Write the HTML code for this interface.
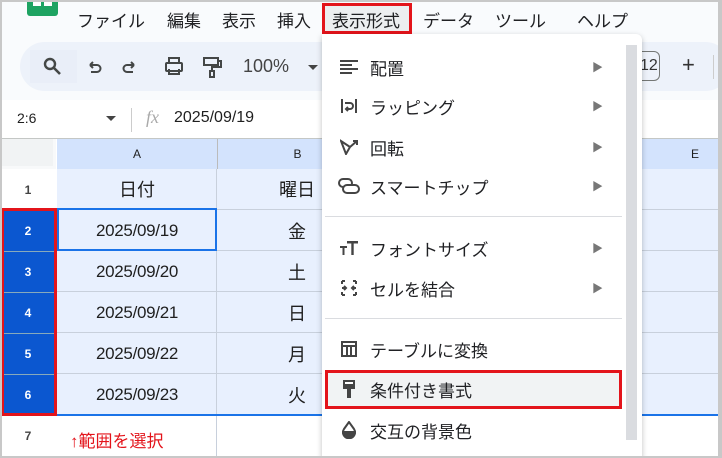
<!DOCTYPE html><html><head><meta charset="utf-8"><style>
*{margin:0;padding:0;box-sizing:border-box}
body{width:722px;height:458px;overflow:hidden;background:#fff;font-family:"Liberation Sans","Noto Sans CJK JP",sans-serif;position:relative;color:#1f1f1f}
.a{position:absolute}
.menu span{position:absolute;top:7px;font-size:17px;color:#202124}
.cell{position:absolute;display:flex;align-items:center;justify-content:center;font-size:16px}
.d{font-size:17px;letter-spacing:-0.3px}
.rh{position:absolute;left:0;width:56px;display:flex;align-items:center;justify-content:center;font-size:12px;font-weight:bold}
.mi{position:absolute;left:322px;width:300px;height:38px;display:flex;align-items:center;font-size:17px;color:#202124}
.mi .ic{width:48px;display:flex;justify-content:center;padding-left:6px}
.mi .ar{position:absolute;left:270px;font-size:11px;color:#777}
</style></head><body>
<div class="a" style="left:0;top:0;width:722px;height:36px;background:#f9fbfd"></div>
<div class="a" style="left:27px;top:0;width:31px;height:16px;background:#1ea362;border-radius:0 0 3px 3px"></div>
<div class="a" style="left:33px;top:2px;width:8px;height:4px;background:#fff"></div><div class="a" style="left:44px;top:2px;width:8px;height:4px;background:#fff"></div>
<div class="menu"><span style="left:77px">ファイル</span><span style="left:167px">編集</span><span style="left:222px">表示</span><span style="left:277px">挿入</span>
<span style="left:332px">表示形式</span><span style="left:423px">データ</span><span style="left:495px">ツール</span><span style="left:577px">ヘルプ</span></div>
<div class="a" style="left:322px;top:3px;width:90px;height:31px;border:3px solid #e3141b;background:rgba(0,0,0,.05)"></div>
<div class="a" style="left:0;top:36px;width:722px;height:64px;background:#f9fbfd"></div>
<div class="a" style="left:20px;top:42px;width:710px;height:49px;background:#edf2fa;border-radius:25px"></div>
<div class="a" style="left:30px;top:50px;width:47px;height:33px;background:#e9eef8"></div>
<svg class="a" style="left:40px;top:55px" width="290" height="26" fill="none" stroke="#444746" stroke-width="2">
<circle cx="10" cy="9" r="5" stroke-width="2.4"/><path d="M14 13l6 6" stroke-width="2.6"/>
<path d="M50 10h7a3.5 3.5 0 010 7h-6M50 10l3-3M50 10l3 3" />
<path d="M94 10h-7a3.5 3.5 0 000 7h6M94 10l-3-3M94 10l-3 3"/>
<rect x="126" y="8" width="16" height="8" rx="1"/><path d="M129 8V3h10v5M129 14v5h10v-5"/>
<rect x="164" y="3" width="14" height="7"/><path d="M178 6h3v6h-9v4"/><rect x="170" y="16" width="4" height="6"/>
</svg>
<div class="a" style="left:243px;top:56px;font-size:18px;color:#444">100%</div>
<div class="a" style="left:308px;top:65px;border:5px solid transparent;border-top-color:#444"></div>
<div class="a" style="left:640px;top:51px;width:20px;height:30px;border:1px solid #747775;border-left:none;border-radius:0 6px 6px 0;font-size:16px;padding:5px 0 0 0;color:#333">12</div>
<div class="a" style="left:682px;top:52px;font-size:22px;color:#333">+</div>
<div class="a" style="left:713px;top:55px;width:1px;height:24px;background:#ccc"></div>
<div class="a" style="left:17px;top:110px;font-size:14px">2:6</div>
<div class="a" style="left:106px;top:116px;border:5px solid transparent;border-top-color:#444"></div>
<div class="a" style="left:131px;top:108px;width:1px;height:24px;background:#ccc"></div>
<div class="a" style="left:146px;top:107px;font-size:18px;color:#aaa;font-style:italic;font-family:'Liberation Serif',serif">fx</div>
<div class="a" style="left:174px;top:109px;font-size:16px">2025/09/19</div>
<div class="a" style="left:0;top:138px;width:722px;height:1px;background:#c4c7c5"></div>
<div class="a" style="left:0;top:139px;width:56px;height:30px;background:#f8f9fa"></div>
<div class="a" style="left:0;top:139px;width:53px;height:27px;background:#f1f3f4"></div>
<div class="a" style="left:57px;top:139px;width:665px;height:30px;background:#d3e3fd"></div>
<div class="cell" style="left:57px;top:139px;width:160px;height:30px;font-size:12px">A</div>
<div class="cell" style="left:217px;top:139px;width:160px;height:30px;font-size:12px;border-left:1px solid #bbb">B</div>
<div class="cell" style="left:660px;top:139px;width:70px;height:30px;font-size:12px">E</div>
<div class="a" style="left:57px;top:169px;width:665px;height:246px;background:#e8f0fe"></div>
<div class="a" style="left:0;top:169px;width:57px;height:41px;background:#fff"></div>
<div class="rh" style="top:169px;height:41px;color:#444">1</div>
<div class="rh" style="top:415px;height:41px;color:#444">7</div>
<div class="a" style="left:2px;top:210px;width:54px;height:205px;background:#0b57d0"></div>
<div class="rh" style="top:210px;height:41px;color:#fff">2</div><div class="rh" style="top:251px;height:41px;color:#fff;border-top:1px solid #8ab">3</div><div class="rh" style="top:292px;height:41px;color:#fff;border-top:1px solid #8ab">4</div><div class="rh" style="top:333px;height:41px;color:#fff;border-top:1px solid #8ab">5</div><div class="rh" style="top:374px;height:41px;color:#fff;border-top:1px solid #8ab">6</div>
<div class="a" style="left:1px;top:208px;width:56px;height:208px;border:3px solid #e3141b"></div>
<div class="a" style="left:216px;top:169px;width:1px;height:289px;background:#c8d0dc"></div>
<div class="a" style="left:57px;top:209px;width:665px;height:1px;background:#c8d0dc"></div>
<div class="a" style="left:57px;top:250px;width:665px;height:1px;background:#c8d0dc"></div>
<div class="a" style="left:57px;top:291px;width:665px;height:1px;background:#c8d0dc"></div>
<div class="a" style="left:57px;top:332px;width:665px;height:1px;background:#c8d0dc"></div>
<div class="a" style="left:57px;top:373px;width:665px;height:1px;background:#c8d0dc"></div>
<div class="a" style="left:57px;top:414px;width:665px;height:2px;background:#1a73e8"></div>
<div class="a" style="left:57px;top:208px;width:160px;height:43px;border:2px solid #1a73e8"></div>
<div class="cell" style="left:57px;top:169px;width:160px;height:40px;font-size:18px">日付</div>
<div class="cell" style="left:217px;top:169px;width:160px;height:40px;font-size:18px">曜日</div>
<div class="cell d" style="left:57px;top:210px;width:160px;height:41px">2025/09/19</div>
<div class="cell d" style="left:57px;top:251px;width:160px;height:41px">2025/09/20</div>
<div class="cell d" style="left:57px;top:292px;width:160px;height:41px">2025/09/21</div>
<div class="cell d" style="left:57px;top:333px;width:160px;height:41px">2025/09/22</div>
<div class="cell d" style="left:57px;top:374px;width:160px;height:41px">2025/09/23</div>
<div class="cell" style="left:217px;top:210px;width:160px;height:41px;font-size:18px">金</div>
<div class="cell" style="left:217px;top:251px;width:160px;height:41px;font-size:18px">土</div>
<div class="cell" style="left:217px;top:292px;width:160px;height:41px;font-size:18px">日</div>
<div class="cell" style="left:217px;top:333px;width:160px;height:41px;font-size:18px">月</div>
<div class="cell" style="left:217px;top:374px;width:160px;height:41px;font-size:18px">火</div>
<div class="a" style="left:70px;top:427px;font-size:17px;color:#e3141b">↑範囲を選択</div>
<div class="a" style="left:322px;top:34px;width:320px;height:424px;background:#fff;border-radius:0 6px 0 0;box-shadow:0 2px 6px rgba(0,0,0,.25)"></div>
<div class="a" style="left:626px;top:45px;width:11px;height:395px;background:#dadce0"></div>
<div class="a" style="left:325px;top:216px;width:297px;height:1px;background:#dadce0"></div>
<div class="a" style="left:325px;top:318px;width:297px;height:1px;background:#dadce0"></div>
<div class="a" style="left:325px;top:370px;width:297px;height:39px;background:#f1f3f4;border:3px solid #e3141b"></div>
<div class="mi" style="top:48px"><span class="ic"><svg width="18" height="14" stroke="#444" stroke-width="2"><path d="M0 1h18M0 5h12M0 9h18M0 13h12"/></svg></span>配置<span class="ar">▶</span></div>
<div class="mi" style="top:87px"><span class="ic"><svg width="16" height="16" fill="none" stroke="#444" stroke-width="2"><path d="M1 1v14M15 1v14M4 5h5a3 3 0 010 6H5M7 9l-2 2 2 2"/></svg></span>ラッピング<span class="ar">▶</span></div>
<div class="mi" style="top:128px"><span class="ic"><svg width="18" height="16" fill="none" stroke="#444" stroke-width="2"><path d="M1 2l5 13 4-7zM10 8l7-6M13 2h4v4"/></svg></span>回転<span class="ar">▶</span></div>
<div class="mi" style="top:167px"><span class="ic"><svg width="22" height="16" fill="none" stroke="#444" stroke-width="2"><rect x="1" y="1" width="13" height="8" rx="4"/><rect x="5" y="7" width="16" height="8" rx="4" fill="#fff"/></svg></span>スマートチップ<span class="ar">▶</span></div>
<div class="mi" style="top:229px"><span class="ic"><svg width="18" height="14" fill="#444"><path d="M0 5h7v2H4.5v7h-2V7H0zM7 0h11v2.5h-4.3V14h-2.4V2.5H7z"/></svg></span>フォントサイズ<span class="ar">▶</span></div>
<div class="mi" style="top:269px"><span class="ic"><svg width="16" height="16" fill="none" stroke="#444" stroke-width="2"><path d="M1 1h3M1 15h3M12 1h3M12 15h3M1 1v3M15 1v3M1 12v3M15 12v3M1 8h4M15 8h-4M3 6l2 2-2 2M13 6l-2 2 2 2"/></svg></span>セルを結合<span class="ar">▶</span></div>
<div class="mi" style="top:330px"><span class="ic"><svg width="16" height="16" fill="none" stroke="#444" stroke-width="2"><rect x="1" y="1" width="14" height="14"/><path d="M1 5h14M6 5v10M10 5v10"/></svg></span>テーブルに変換</div>
<div class="mi" style="top:370px"><span class="ic"><svg width="14" height="18" fill="#444"><path d="M1 0h12v9H1zM5 9h4v9H5z"/><path d="M3 2h8v2H3z" fill="#fff"/></svg></span>条件付き書式</div>
<div class="mi" style="top:411px"><span class="ic"><svg width="16" height="18" fill="none" stroke="#444" stroke-width="2"><path d="M8 1L3 8a6 6 0 1010 0z"/><path d="M2 11h12a6 6 0 01-12 0z" fill="#444"/></svg></span>交互の背景色</div>
<div class="a" style="left:0;top:0;width:722px;height:2px;background:#c8c8c8"></div>
<div class="a" style="left:718px;top:0;width:4px;height:458px;background:#c8c8c8"></div>
<div class="a" style="left:0;top:456px;width:722px;height:2px;background:#c8c8c8"></div>
<div class="a" style="left:0;top:0;width:2px;height:458px;background:#c8c8c8"></div>
</body></html>
